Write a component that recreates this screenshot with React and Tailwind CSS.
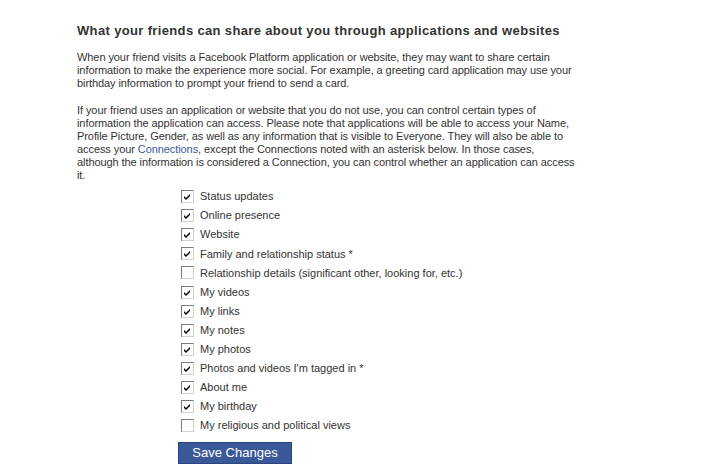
import React, { useState } from 'react';

const OPTIONS = [
  { label: 'Status updates', checked: true },
  { label: 'Online presence', checked: true },
  { label: 'Website', checked: true },
  { label: 'Family and relationship status *', checked: true },
  { label: 'Relationship details (significant other, looking for, etc.)', checked: false },
  { label: 'My videos', checked: true },
  { label: 'My links', checked: true },
  { label: 'My notes', checked: true },
  { label: 'My photos', checked: true },
  { label: "Photos and videos I'm tagged in *", checked: true },
  { label: 'About me', checked: true },
  { label: 'My birthday', checked: true },
  { label: 'My religious and political views', checked: false },
];

const Box = ({ checked, onClick }) => (
  <span
    onClick={onClick}
    className="flex h-[13px] w-[13px] shrink-0 cursor-pointer items-center justify-center border border-t-[#7a7a7a] border-l-[#7a7a7a] border-r-[#d4d0c8] border-b-[#d4d0c8] bg-white"
  >
    {checked && (
      <svg width="9" height="9" viewBox="0 0 9 9">
        <path d="M1 4 L3 6 L7 2 L7 4 L3 8 L1 6 Z" fill="#000" />
      </svg>
    )}
  </span>
);

export default function App() {
  const [opts, setOpts] = useState(OPTIONS);

  const toggle = (i) =>
    setOpts((prev) => prev.map((o, j) => (j === i ? { ...o, checked: !o.checked } : o)));

  return (
    <div className="h-[476px] w-[701px] bg-white font-['Liberation_Sans',Arial,sans-serif] text-[#333]">
      <div className="whitespace-nowrap pl-[77px] pt-[23px]">
        <h2 className="text-[13px] font-bold leading-[16px] tracking-[0.35px]">
          What your friends can share about you through applications and websites
        </h2>

        <p className="mt-[12px] text-[11px] leading-[13px] tracking-[-0.08px]">
          When your friend visits a Facebook Platform application or website, they may want to share certain
          <br />
          information to make the experience more social. For example, a greeting card application may use your
          <br />
          birthday information to prompt your friend to send a card.
        </p>

        <p className="mt-[14px] text-[11px] leading-[13px] tracking-[-0.08px]">
          If your friend uses an application or website that you do not use, you can control certain types of
          <br />
          information the application can access. Please note that applications will be able to access your Name,
          <br />
          Profile Picture, Gender, as well as any information that is visible to Everyone. They will also be able to
          <br />
          access your <a className="text-[#3b5998]">Connections</a>, except the Connections noted with an asterisk
          below. In those cases,
          <br />
          although the information is considered a Connection, you can control whether an application can access
          <br />
          it.
        </p>
      </div>

      <div className="ml-[181px] mt-[5px] flex flex-col">
        {opts.map((o, i) => (
          <label key={o.label} className="flex h-[19.1px] items-center gap-[6px] text-[11px] text-[#333]">
            <Box checked={o.checked} onClick={() => toggle(i)} />
            <span>{o.label}</span>
          </label>
        ))}
      </div>

      <button className="ml-[178px] mt-[7px] h-[22px] w-[114px] border border-[#29447e] bg-[#3b5998] text-[13px] leading-[18px] text-white">
        Save Changes
      </button>
    </div>
  );
}
